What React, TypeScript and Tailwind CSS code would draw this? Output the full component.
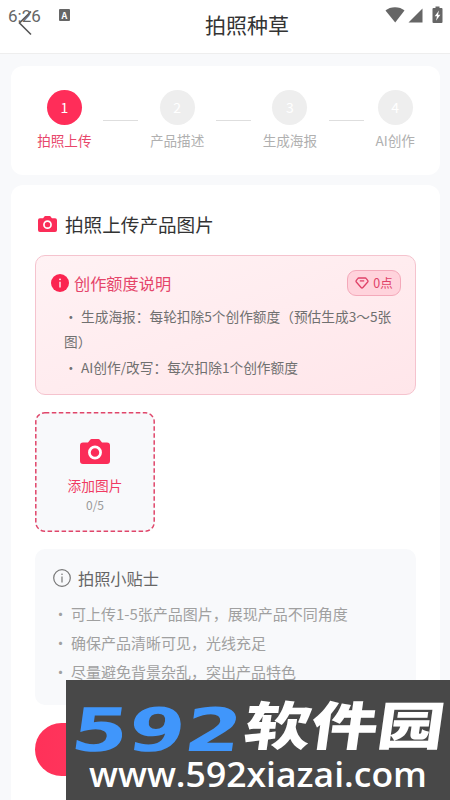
import clsx from 'clsx';

const steps = [
  { id: 1, label: '拍照上传' },
  { id: 2, label: '产品描述' },
  { id: 3, label: '生成海报' },
  { id: 4, label: 'AI创作' },
];

const quotaRules = [
  '生成海报：每轮扣除5个创作额度（预估生成3～5张图）',
  'AI创作/改写：每次扣除1个创作额度',
];

const tips = [
  '可上传1-5张产品图片，展现产品不同角度',
  '确保产品清晰可见，光线充足',
  '尽量避免背景杂乱，突出产品特色',
];

function CameraIcon({ className }: { className?: string }) {
  return (
    <svg viewBox="0 0 30 25" preserveAspectRatio="none" className={className}>
      <path
        fill="#fb2d58"
        d="M3 3.5h5l2.2-2.8c.4-.5.8-.7 1.400-.7h6.800c.6 0 1 .2 1.400.7L22 3.500h5a3 3 0 0 1 3 3V22a3 3 0 0 1-3 3H3a3 3 0 0 1-3-3V6.500a3 3 0 0 1 3-3Z"
      />
      <circle cx="15" cy="13.500" r="5.600" fill="none" stroke="#fff" strokeWidth="2.700" />
    </svg>
  );
}

function StatusBar() {
  return (
    <div className="absolute inset-x-0 top-0 h-8">
      <span className="absolute left-2 top-[4px] font-['Roboto',sans-serif] text-[17px] leading-6 text-[#666]">
        6:26
      </span>
      <div className="absolute left-[59px] top-[9px] flex h-[12px] w-[11px] items-center justify-center rounded-[1px] bg-[#666] text-[9px] font-bold leading-none text-white">
        A
      </div>
      <svg viewBox="0 0 58 18" className="absolute left-[385px] top-[5px] h-[18px] w-[58px]" fill="#666">
        <path d="M0.500 5.500C5 1 15 1 19.500 5.500L10.200 17.500Z" />
        <path d="M37.500 3.500V17.500H23.500Z" />
        <path d="M48.500 3h2V1.500h4V3h2a1 1 0 0 1 1 1v13a1 1 0 0 1-1 1h-8a1 1 0 0 1-1-1V4a1 1 0 0 1 1-1Z" />
        <path d="M54 5.500l-4.300 5.700h2.300l-1 4.600 4.400-6h-2.400Z" fill="#fff" />
      </svg>
    </div>
  );
}

function Header() {
  return (
    <header className="relative h-[54px] shrink-0 border-b border-[#eeeeee] bg-white">
      <svg viewBox="0 0 14 26" className="absolute left-[18px] top-[10px] h-[26px] w-[14px]" fill="none">
        <path d="M13 1.500L1.500 13L13 24.500" stroke="#555" strokeWidth="1.600" />
      </svg>
      <StatusBar />
      <h1 className="pl-[44px] pt-[8px] text-center text-[21px] leading-8 text-[#333]">拍照种草</h1>
    </header>
  );
}

function Steps() {
  return (
    <section className="flex h-[109px] shrink-0 items-start justify-center rounded-xl bg-white pl-px pt-6">
      {steps.map((step, index) => (
        <div key={step.id} className="flex items-start">
          {index > 0 && <div className="mx-[11.7px] mt-[30px] h-px w-[35px] bg-[#dedede]" />}
          <div className="flex flex-col items-center">
            <div
              className={clsx(
                'flex size-[35px] items-center justify-center rounded-full text-[14px] text-white',
                index === 0 ? 'bg-[#ff2d59]' : 'bg-[#eeeeee]',
              )}
            >
              {step.id}
            </div>
            <span
              className={clsx(
                'mt-[5px] text-[13.6px] leading-5',
                index === 0 ? 'text-[#e8476b]' : 'text-[#b0b0b0]',
              )}
            >
              {step.label}
            </span>
          </div>
        </div>
      ))}
    </section>
  );
}

function QuotaNotice() {
  return (
    <div className="mt-[16px] h-[140px] rounded-[10px] border border-[#f5c3ce] bg-linear-to-br from-[#fff2f4] to-[#ffe6ea] px-[15px] pt-[14px]">
      <div className="flex items-center justify-between">
        <div className="flex items-center gap-[5px]">
          <svg viewBox="0 0 18 18" className="size-[18px]">
            <circle cx="9" cy="9" r="9" fill="#fb2450" />
            <path d="M9 7.800V13.500" stroke="#fff" strokeWidth="1.300" />
            <circle cx="9" cy="5.300" r="0.900" fill="#fff" />
          </svg>
          <span className="text-[16.2px] leading-6 text-[#e5456a]">创作额度说明</span>
        </div>
        <div className="-mr-px flex h-[26px] w-[54px] items-center justify-center gap-1 rounded-[9px] border border-[#f4a9ba] bg-[#ffd3dc]">
          <svg viewBox="0 0 14 12" className="h-3 w-[14px]" fill="none" stroke="#df4268" strokeWidth="1.300">
            <path
              d="M3.800 1h6.400q.7 0 1.100.6l1.500 2q.5.7-.1 1.400L7.900 10.500q-.9 1-1.800 0L1.300 5q-.6-.7-.1-1.400l1.500-2q.4-.6 1.100-.6Z"
              strokeLinejoin="round"
            />
            <path d="M4.800 3.900h4.400" />
          </svg>
          <span className="text-[12.500px] leading-5 text-[#df4268]">0点</span>
        </div>
      </div>
      <ul className="mt-[8px] pl-[13px] text-[13.7px] leading-[25px] text-[#707070]">
        {quotaRules.map((rule) => (
          <li key={rule} className="mb-px">
            <span className="inline-block w-[17px]">·</span>
            {rule}
          </li>
        ))}
      </ul>
    </div>
  );
}

function Tips() {
  return (
    <div className="mt-[17px] h-[156px] rounded-[10px] bg-[#f8f9fb] pl-[18px] pt-[17px]">
      <div className="flex items-center gap-[7px]">
        <svg viewBox="0 0 18 18" className="size-[18px]" fill="none" stroke="#777">
          <circle cx="9" cy="9" r="8.300" strokeWidth="1.200" />
          <path d="M9 7.500V13.500" strokeWidth="1.200" />
          <circle cx="9" cy="5.200" r="0.800" fill="#777" stroke="none" />
        </svg>
        <span className="text-[16.2px] leading-6 text-[#666]">拍照小贴士</span>
      </div>
      <ul className="mt-[9px] text-[15px] leading-[29px] text-[#a0a0a0]">
        {tips.map((tip) => (
          <li key={tip} className="flex">
            <span className="w-[18px] shrink-0">·</span>
            {tip}
          </li>
        ))}
      </ul>
    </div>
  );
}

function SiteBanner() {
  return (
    <div className="absolute bottom-0 right-0 h-[120px] w-[384px] overflow-hidden bg-[#484848]">
      <svg viewBox="0 0 384 120" className="h-full w-full">
        <text
          transform="translate(3 71) skewX(-8)"
          fontFamily="'DejaVu Sans', sans-serif"
          fontWeight="700"
          fontSize="60"
          textLength="170"
          lengthAdjust="spacingAndGlyphs"
          fill="#4096fb"
        >
          592
        </text>
        <text
          transform="translate(176 65) skewX(-8)"
          fontFamily="'Noto Sans CJK SC', sans-serif"
          fontWeight="900"
          fontSize="52"
          textLength="200"
          lengthAdjust="spacingAndGlyphs"
          fill="#fff"
        >
          软件园
        </text>
        <text
          x="23"
          y="107"
          fontFamily="'Open Sans', 'Noto Sans', sans-serif"
          fontWeight="600"
          fontSize="35"
          textLength="338"
          lengthAdjust="spacingAndGlyphs"
          fill="#fff"
        >
          www.592xiazai.com
        </text>
      </svg>
    </div>
  );
}

export default function App() {
  return (
    <div className="relative flex h-[800px] w-[450px] flex-col overflow-hidden bg-[#f8f9fb] font-['Noto_Sans_CJK_SC',sans-serif]">
      <Header />
      <main className="flex flex-1 flex-col gap-[10px] pl-[11px] pr-[10px] pt-[12px]">
        <Steps />
        <section className="h-[640px] shrink-0 rounded-xl bg-white px-6 pt-[24px]">
          <div className="flex items-center gap-2 pl-[3px]">
            <CameraIcon className="h-4 w-[19px]" />
            <h2 className="text-[18.600px] leading-[30px] text-[#333]">拍照上传产品图片</h2>
          </div>
          <QuotaNotice />
          <button className="relative mt-[17px] flex size-[120px] flex-col items-center rounded-[10px] bg-[#f8f9fb] pt-[27px]">
            <svg viewBox="0 0 120 120" className="absolute inset-0 size-full" fill="none">
              <rect
                x="0.800"
                y="0.800"
                width="118.400"
                height="118.400"
                rx="9"
                stroke="#e0466a"
                strokeWidth="1.500"
                strokeDasharray="4.500 2.500"
              />
            </svg>
            <CameraIcon className="h-[25px] w-[30px]" />
            <span className="mt-[10px] text-[13.7px] leading-[22px] text-[#f03a62]">添加图片</span>
            <span className="text-[12px] leading-[18px] text-[#999]">0/5</span>
          </button>
          <Tips />
          <button className="mt-[18px] h-[53px] w-full rounded-full bg-linear-to-r from-[#ff3159] to-[#ff4f75]" />
        </section>
      </main>
      <SiteBanner />
    </div>
  );
}
